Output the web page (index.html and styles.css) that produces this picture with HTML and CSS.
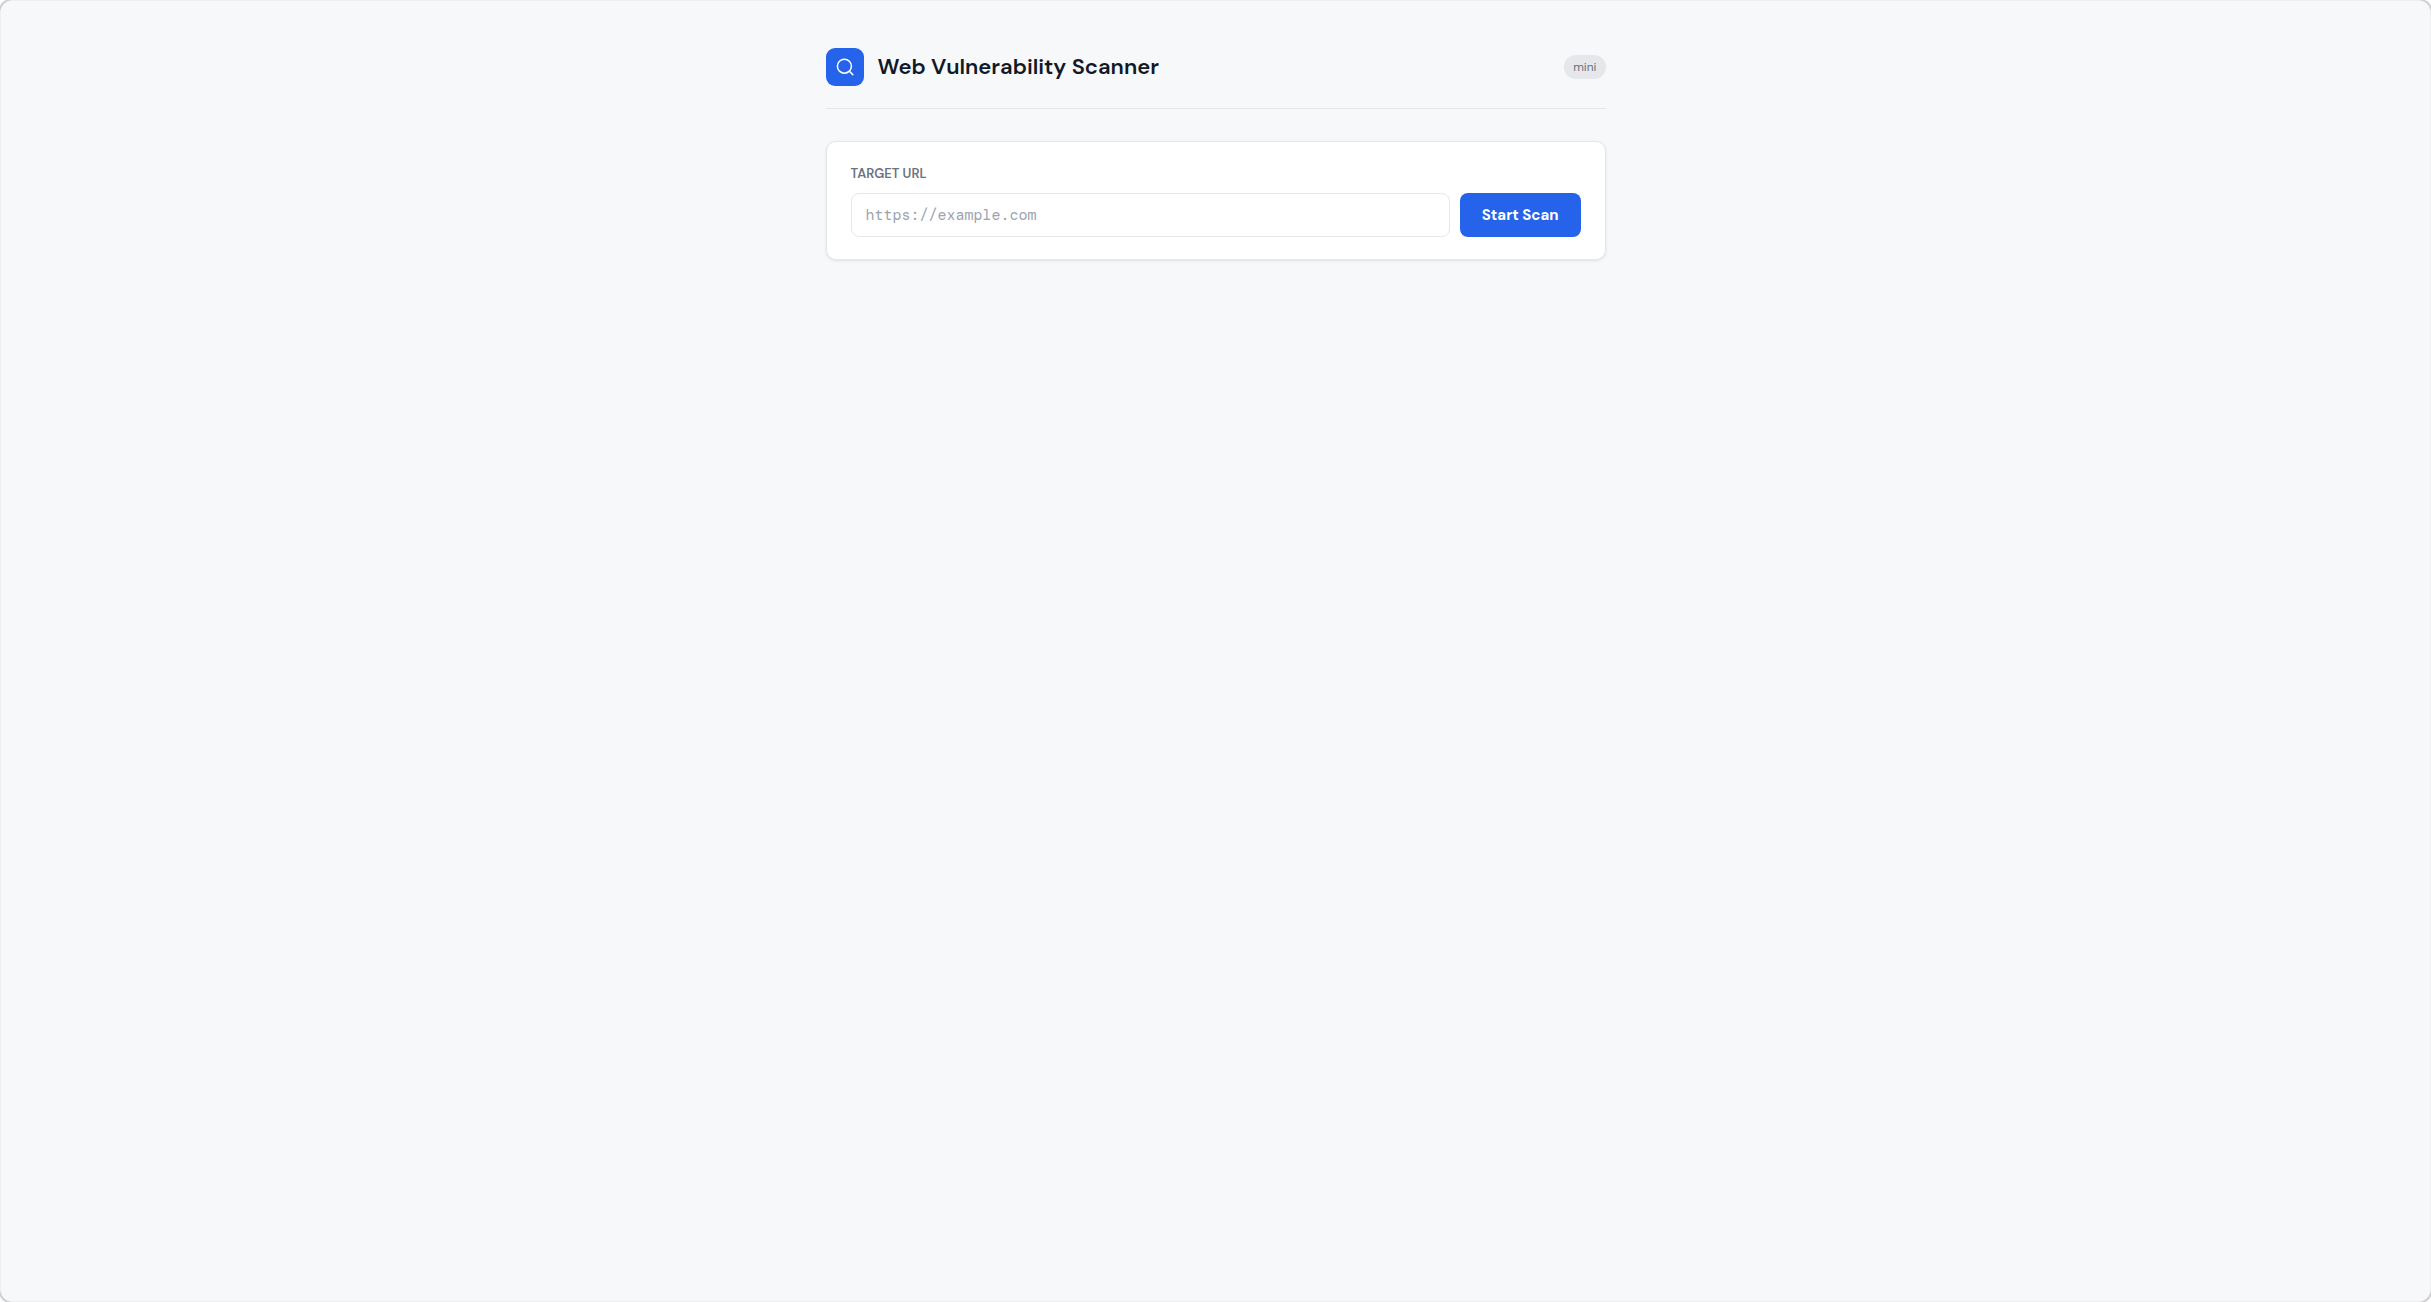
FILE: index.html
```html
<!DOCTYPE html>
<html lang="en">
<head>
<meta charset="utf-8">
<meta name="viewport" content="width=device-width, initial-scale=1">
<title>Web Vulnerability Scanner</title>
<link rel="stylesheet" href="styles.css">
</head>
<body>
<div class="page">
  <div class="container">
    <header class="header">
      <div class="logo">
        <svg width="20" height="20" viewBox="0 0 20 20" fill="none" stroke="currentColor" stroke-width="1.5" stroke-linecap="round" aria-hidden="true">
          <circle cx="9.4" cy="9.2" r="7"/>
          <path d="M14.4 14.2l3.4 3.4"/>
        </svg>
      </div>
      <h1 class="title">Web Vulnerability Scanner</h1>
      <span class="badge">mini</span>
    </header>
    <main>
      <form class="card">
        <label class="label" for="target">TARGET URL</label>
        <div class="row">
          <input class="input" id="target" type="url" placeholder="https://example.com">
          <button class="button" type="submit">Start Scan</button>
        </div>
      </form>
    </main>
  </div>
</div>
</body>
</html>
```
FILE: styles.css
```css
* { box-sizing: border-box; }

body {
  margin: 0;
  background: #fff;
  color: #111827;
  font-family: "DM Sans", Inter, "Liberation Sans", sans-serif;
}

.page {
  min-height: 100vh;
  padding: 47px 24px;
  background: #f7f8fa;
  border: 1px solid #eeeff1;
  border-radius: 12px;
  box-shadow: 0 0 2px 1px rgba(0, 0, 0, 0.3);
}

.container {
  max-width: 780px;
  margin: 0 auto;
}

.header {
  display: flex;
  align-items: center;
  gap: 14px;
  margin-bottom: 32px;
  padding-bottom: 22px;
  border-bottom: 1px solid #e5e7eb;
}

.logo {
  display: flex;
  align-items: center;
  justify-content: center;
  width: 38px;
  height: 38px;
  border-radius: 9px;
  background: #2563eb;
  color: #fff;
}

.title {
  margin: 0;
  font-size: 22px;
  line-height: 28px;
  font-weight: 600;
}

.badge {
  margin-left: auto;
  padding: 3px 9px;
  border-radius: 12px;
  background: #e5e7eb;
  color: #6b7280;
  font-size: 12px;
  line-height: 18px;
  font-weight: 400;
}

.card {
  padding: 22px 24px;
  border: 1px solid #e5e7eb;
  border-radius: 10px;
  background: #fff;
  box-shadow: 0 1px 3px rgba(0, 0, 0, 0.1);
}

.label {
  display: block;
  margin-bottom: 10px;
  color: #6b7280;
  font-size: 13px;
  line-height: 19px;
  font-weight: 600;
}

.row {
  display: flex;
  gap: 10px;
}

.input {
  flex: 1;
  min-width: 0;
  height: 44px;
  padding: 0 14px;
  border: 1px solid #e5e7eb;
  border-radius: 8px;
  background: #fff;
  color: #111827;
  font-family: "DM Mono", "Liberation Mono", monospace;
  font-size: 15px;
}

.input::placeholder { color: #9ca3af; }

.button {
  height: 44px;
  padding: 0 22px;
  border: 0;
  border-radius: 8px;
  background: #2563eb;
  color: #fff;
  font-family: inherit;
  font-size: 15px;
  font-weight: 700;
}
```
